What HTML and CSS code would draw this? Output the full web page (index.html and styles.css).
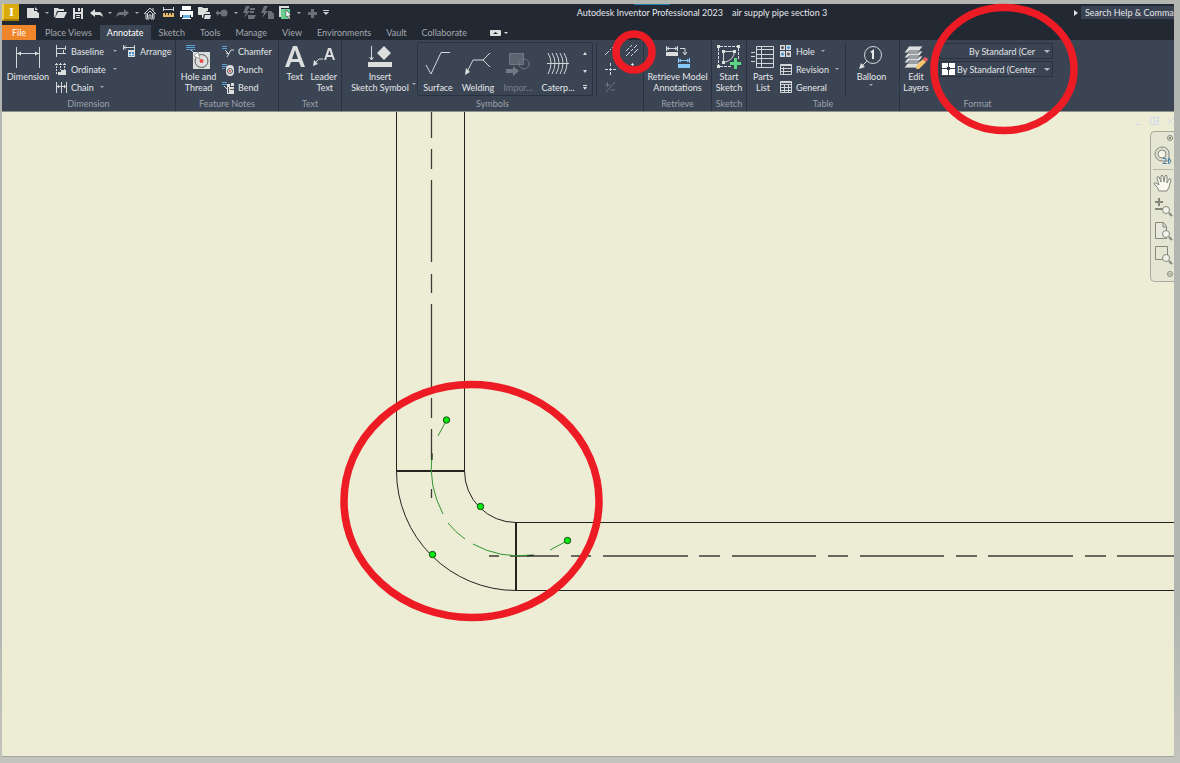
FILE: index.html
```html
<!DOCTYPE html>
<html lang="en">
<head>
<meta charset="utf-8">
<title>Autodesk Inventor Professional 2023</title>
<link rel="stylesheet" href="styles.css">
</head>
<body>
<div class="app">
  <header class="titlebar">
    <button class="logo" aria-label="Inventor">I</button>
    <div class="quick">
      <button class="tool" aria-label="New"><svg width="14" height="14"><path class="f" d="M1 2h7v3h3v1l2 1v5H1z"/><path class="f" d="M9 1l3 3H9z"/></svg></button>
      <button class="caret" aria-label="New options"></button>
      <button class="tool" aria-label="Open"><svg width="14" height="14"><path class="f" d="M1 2h4l1 1h5v2H4l-2 6H1z"/><path class="f" d="M5 6h9l-3 6H2z"/></svg></button>
      <button class="tool" aria-label="Save"><svg width="14" height="14"><path class="f" fill-rule="evenodd" d="M2 2h10v11H2zM4 2v4h6V2zM4 8v5h6V8z"/><path class="f" d="M7 2h2v3H7zM5 9h4v1H5zM5 11h4v1H5z"/></svg></button>
      <button class="tool" aria-label="Undo"><svg width="14" height="14"><path class="f" d="M1 7l5-4v3h4q3 0 4 5-2-2-4-2H6v2z"/></svg></button>
      <button class="caret" aria-label="Undo list"></button>
      <button class="tool dim" aria-label="Redo"><svg width="14" height="14"><path class="f" d="M13 7L8 3v3H4Q1 6 0 11q2-2 4-2h4v2z"/></svg></button>
      <button class="caret" aria-label="Redo list"></button>
      <button class="tool" aria-label="Home"><svg width="14" height="14"><path class="s" d="M1 8l6-6 6 6M3 7v6h3V9h2v4h3V7M10 2v3"/><path class="s" d="M4 8l3-3 3 3M4.500 8v4M9.500 8v4"/></svg></button>
      <button class="tool" aria-label="Measure"><svg width="14" height="14"><path fill="#e3b567" d="M2 7h11v4H2z"/><path class="s" d="M2.500 1v4M12.500 1v4M2 3.500h10"/><path stroke="#333" d="M4.500 7v2M7.500 7v2M10.500 7v2"/></svg></button>
      <button class="tool" aria-label="Print"><svg width="14" height="14"><path fill="#fff" d="M3 0h9v4H3zM1 5h13v6h-2V9H3v2H1z"/><path fill="#69b4e5" d="M4 9h7v3H4z"/><path fill="#fff" d="M3 12h9v1H3z"/></svg></button>
      <button class="tool" aria-label="Project"><svg width="14" height="14"><path class="f" d="M1 1h4l1 1h5v3H5v4H1z"/><path class="f" d="M5 5h4l1 1h3v2H7l-1 4H5z"/><path class="f" d="M8 9h6l-1 4H7z"/></svg></button>
      <button class="tool dim" aria-label="Link"><svg width="14" height="14"><circle class="f" cx="9" cy="7" r="3.500"/><path class="f" d="M1 6h6v2H1zM2 4l3 3-3 3z"/></svg></button>
      <button class="caret" aria-label="Link options"></button>
      <button class="tool dim" aria-label="Update"><svg width="14" height="14"><path class="f" d="M4 0h4L5 5h3L2 12l2-5H1z"/><path class="f" d="M8 2h5v2H8zM8 5h4v2H8zM6 9h8l-2 4H6z"/></svg></button>
      <button class="tool dim" aria-label="Update all"><svg width="14" height="14"><path class="f" d="M4 0h4L5 5h3L2 12l2-5H1z"/><path class="f" d="M8 5h3l3 3v5H8z"/></svg></button>
      <button class="tool" aria-label="Select"><svg width="14" height="14"><path class="f" d="M1 0h10v2H3v9H1z"/><path fill="#69ce91" d="M3 3h9v10H3z"/><path fill="#fff" stroke="#222" stroke-width=".5" d="M8 4l5 5-2 .5 1.500 3-1.500.5-1.300-3L8 11z"/></svg></button>
      <button class="caret" aria-label="Select options"></button>
      <button class="tool dim" aria-label="Add"><svg width="14" height="14"><path class="f" d="M6 3h3v3h3v3H9v3H6V9H3V6h3z"/></svg></button>
      <button class="caret bar" aria-label="Customize"></button>
    </div>
    <div class="title"><span>Autodesk Inventor Professional 2023</span><span>air supply pipe section 3</span></div>
    <button class="expand" aria-label="Expand search"><svg width="8" height="8"><path class="f" d="M4 1l4 3-4 3z"/></svg></button>
    <input class="search" aria-label="Search" value="Search Help &amp; Commands...">
  </header>

  <nav class="tabs">
    <button class="file">File</button>
    <button>Place Views</button><button class="on">Annotate</button><button>Sketch</button><button>Tools</button><button>Manage</button><button>View</button><button>Environments</button><button>Vault</button><button>Collaborate</button>
    <button class="mini" aria-label="Minimize ribbon"><svg width="20" height="8"><rect class="f" y="1" width="11" height="6" rx="1"/><path fill="#222933" d="M3 5l2.500-2L8 5z"/><path class="f" d="M14 3h4l-2 2z"/></svg></button>
  </nav>

  <div class="ribbon">
    <section class="panel dimension">
      <div class="body">
        <button class="big"><svg width="26" height="24"><path class="s" d="M1.500 2v21M24.500 2v21M2 8.500h22"/><path class="f" d="M2 8.500l4-2v4zM24 8.500l-4-2v4z"/></svg><span>Dimension</span></button>
        <div class="col mid">
          <button class="row spread"><svg width="12" height="12"><path class="s" d="M1.500 0v12M1 3.500h9M10.500 1v4M1 8.500h10M8.500 5v3"/></svg>Baseline<i></i></button>
          <button class="row spread"><svg width="12" height="12"><path class="s" stroke-dasharray="2 1" d="M1.500 0v11M5.500 0v7M9.500 0v7"/><path class="f" d="M3 9h3V7h5v5H3zM0 1h3v1H0zM4 1h3v1H4zM8 1h3v1H8z"/></svg>Ordinate<i></i></button>
          <button class="row"><svg width="12" height="12"><path class="s" d="M1.500 1v11M6.500 1v11M11.500 1v11M1 5.500h10"/><path class="f" d="M2 5.500l2-2v4zM11 5.500l-2-2v4z"/></svg>Chain<i></i></button>
        </div>
        <div class="col">
          <button class="row"><svg width="13" height="12"><path class="s" d="M.5 0v5M1 2.500h10M11.500 0v5M1 2.500l2-2M1 2.500l2 2"/><path class="f" d="M5 5h7v7H5z"/><path fill="#3b91cf" d="M6 7h2v2H6zM9 7h2v2H9zM6 10h2v1H6zM9 10h2v1H9z"/></svg>Arrange</button>
        </div>
      </div>
      <h2>Dimension</h2>
    </section>

    <section class="panel feature">
      <div class="body">
        <button class="big"><svg width="26" height="26"><path class="b" d="M0 1.500h9M0 3.500h9M0 5.500h9"/><path class="f" d="M7 8h17v17H7z"/><circle fill="none" stroke="#555" cx="15.500" cy="17" r="6.500"/><circle fill="#e44" cx="15.500" cy="17" r="2"/><path class="s" d="M5 6l9 9"/><path fill="#fff" stroke="#555" stroke-width=".5" d="M14 15l-6-3 4-4z"/></svg><span>Hole and<br>Thread</span></button>
        <div class="col">
          <button class="row"><svg width="13" height="13"><path class="b" d="M0 1.500h5M0 3.500h5"/><path class="s" d="M3 5l4 4M5 12l4-7h3M7 9l-3-1"/></svg>Chamfer</button>
          <button class="row"><svg width="13" height="13"><path class="b" d="M0 1.500h5M0 3.500h5M0 5.500h3"/><rect class="f" x="4" y="2" width="8" height="11" rx="4"/><circle fill="none" stroke="#555" cx="8" cy="8" r="2.500"/><circle fill="#e44" cx="8" cy="8" r="1"/></svg>Punch</button>
          <button class="row"><svg width="13" height="13"><path class="b" d="M0 1.500h5M0 3.500h5"/><path class="f" d="M5 3h3v3h4v7H5zM9 2h3v3H9z"/><path class="s" d="M2 5l3 3"/><path stroke="#555" fill="none" d="M6.500 6v6M8 8.500h4"/></svg>Bend</button>
        </div>
      </div>
      <h2>Feature Notes</h2>
    </section>

    <section class="panel text">
      <div class="body">
        <button class="big"><svg width="20" height="24"><path class="f" fill-rule="evenodd" d="M8 1h4l8 21h-4l-2-5H6l-2 5H0zM10 5l-3 9h6z"/></svg><span>Text</span></button>
        <button class="big"><svg width="24" height="24"><path class="f" fill-rule="evenodd" d="M16 3h3l4 12h-2l-1-3h-5l-1 3h-2zM17.500 5L16 10h3z"/><path class="f" d="M1 21l1-6 4 4z"/><path class="s" d="M3 18l4-4h4"/></svg><span>Leader<br>&nbsp;Text</span></button>
      </div>
      <h2>Text</h2>
    </section>

    <section class="panel symbols">
      <div class="body">
        <button class="big"><svg width="24" height="24"><path class="f" d="M16 1l7 7-7 7-7-7zM0 17h24v5H0z"/><path class="s" d="M3.500 1v14M1.500 12l2 3 2-3"/></svg><span>Insert<br>Sketch Symbol</span><i class="corner"></i></button>
        <div class="gallery">
          <button><svg width="28" height="28"><path class="s" d="M2 16l5 9L17 3.500h9"/></svg><span>Surface</span></button>
          <button><svg width="28" height="28"><path class="s" d="M3 23l6-12h10l7-7M19 11l7 7"/><path class="f" d="M1 26l1-7 4 4z"/></svg><span>Welding</span></button>
          <button class="off"><svg width="28" height="28"><path fill="#9aa0a8" class="box" d="M5.500 4.500h14v11h-14z"/><circle class="s" cx="20" cy="15" r="5"/><path class="f" d="M2 20h7v-3l6 5-6 5v-3H2z"/></svg><span>Impor...</span></button>
          <button><svg width="28" height="28"><path class="s" d="M3 14.500h22M4 4q6 10 0 21M8 4q6 10 0 21M12 4q6 10 0 21M16 4q6 10 0 21M20 4q6 10 0 21"/></svg><span>Caterp...</span></button>
          <div class="scroll">
            <button aria-label="Up"><svg width="6" height="4"><path class="f" d="M1 4h4L3 1z"/></svg></button>
            <button aria-label="Down"><svg width="6" height="4"><path class="f" d="M1 0h4L3 3z"/></svg></button>
            <button aria-label="More"><svg width="6" height="6"><path class="f" d="M1 0h4v1H1zM1 2h4L3 5z"/></svg></button>
          </div>
        </div>
        <div class="marks">
          <button aria-label="Centerline"><svg width="12" height="12"><path class="s" d="M1 10l4-4M6 5l1-1M8 3l3-3"/></svg></button>
          <button aria-label="Centerline bisector"><svg width="14" height="12"><path class="s" d="M1 6l3-3M5 2l2-2M1 11l4-4M6 6l2-2M9 3l3-3M6 11l2-2M9 8l4-4"/></svg></button>
          <button aria-label="Center mark"><svg width="12" height="12"><path class="s" d="M6.500 0v3M6.500 9v3M1 6.500h3M9 6.500h3M5 6.500h3M6.500 5v3"/></svg></button>
          <button aria-label="Centered pattern"><svg width="12" height="12"><path class="s" d="M6.500 0v3M5 1.500h3"/></svg></button>
          <button class="off" aria-label="Edit"><svg width="12" height="12"><path class="s" d="M2 11L11 1M1 4h5M3.500 1v5M7 9h4"/></svg></button>
        </div>
      </div>
      <h2>Symbols</h2>
    </section>

    <section class="panel retrieve">
      <div class="body">
        <button class="big"><svg width="24" height="26"><path class="f" d="M0 8h12v4H0z"/><path class="s" d="M.5 2v5M11.500 2v5M1 4.500h10M14 4.500h5V10M17 8l2 3 2-3M3 3L1 4.500 3 6M9 3l2 1.500L9 6"/><path fill="#85c8fa" d="M12 20h12v4H12z"/><path stroke="#85c8fa" fill="none" d="M12.500 14v5M23.500 14v5M13 16.500h10M15 15l-2 1.500 2 1.500M21 15l2 1.500-2 1.500"/></svg><span>Retrieve Model<br>Annotations</span></button>
      </div>
      <h2>Retrieve</h2>
    </section>

    <section class="panel sketch">
      <div class="body">
        <button class="big"><svg width="26" height="26"><path class="s" d="M4 2.500h17M2.500 4v17M22.500 4v11M4 22.500h12" stroke-dasharray="3 1"/><path class="s" d="M7.500 18V7.500h11Q18 16 8 18.500"/><path class="f" d="M1 1h3v3H1zM21 1h3v3h-3zM1 21h3v3H1zM6 6h3v3H6zM6 17h3v3H6zM17 6h3v3h-3z"/><path fill="#5bd783" d="M18 14h3v4h4v3h-4v4h-3v-4h-4v-3h4z"/></svg><span>Start<br>Sketch</span></button>
      </div>
      <h2>Sketch</h2>
    </section>

    <section class="panel table">
      <div class="body">
        <button class="big"><svg width="24" height="26"><path class="s" d="M5.500 2.500h17v21h-17zM10.500 2v21M5 5.500h17M5 10.500h17M5 14.500h17M5 19.500h17M0 8.500h4M0 12.500h4M0 17.500h4"/></svg><span>Parts<br>List</span></button>
        <div class="col">
          <button class="row"><svg width="12" height="12"><path class="f" d="M0 0h5v5H0zM6 0h5v5H6zM0 6h5v6H0zM6 6h5v6H6z"/><circle fill="#555" cx="2.500" cy="2.500" r="1.500"/><circle fill="#3b91cf" cx="8.500" cy="2.500" r="1.500"/><circle fill="#3b91cf" cx="2.500" cy="9" r="1.500"/><circle fill="#555" cx="8.500" cy="9" r="1.500"/></svg>Hole<i></i></button>
          <button class="row"><svg width="12" height="12"><path class="s" d="M.5 1.500h11v10H.5zM1 2.500h11M1 5.500h11M1 8.500h11M3.500 4v7"/></svg>Revision<i></i></button>
          <button class="row"><svg width="12" height="12"><path class="s" d="M.5.5h11v11H.5zM1 1.500h11M1 3.500h11M1 6.500h11M1 9.500h11M4.500 3v8M8.500 3v8"/></svg>General</button>
        </div>
        <button class="big balloon"><svg width="26" height="26"><circle class="s" cx="15" cy="11" r="8.500"/><path class="s" d="M9 17l-6 6"/><path fill="none" stroke="#e6e7e8" stroke-width="2" d="M13 8.500l2-1.500v8"/><path class="f" d="M1 25l2-6 4 4z"/></svg><span>Balloon</span><i></i></button>
      </div>
      <h2>Table</h2>
    </section>

    <section class="panel format">
      <div class="body">
        <button class="big"><svg width="26" height="28"><path class="f" stroke="#3b4453" stroke-width=".8" d="M1 25l5-7h14l-5 7zM1 20l5-7h14l-5 7zM1 15l5-7h14l-5 7zM1 10l5-7h14l-5 7z"/><path fill="#f6c66a" d="M13 26l1-4 6-6 3 3-7 7z"/><path fill="#ef5966" d="M20 16l2-2q2 0 3 3l-2 2z"/></svg><span>Edit<br>Layers</span></button>
        <div class="pickers">
          <div class="pick"><select class="inset" aria-label="Object layer"><option>By Standard (Cer</option></select></div>
          <div class="pick"><svg width="13" height="12"><path fill="#fff" d="M0 0h6v5H0zM7 0h6v5H7zM0 6h6v6H0zM7 6h6v6H7z"/><path fill="#222933" d="M5 4h1v1H5zM7 4h1v1H7zM5 6h1v1H5zM7 6h1v1H7z"/></svg><select aria-label="Object style"><option>By Standard (Center</option></select></div>
        </div>
      </div>
      <h2>Format</h2>
    </section>
  </div>

  <main class="canvas">
    <svg class="drawing" viewBox="2 112 1172 644" preserveAspectRatio="xMinYMin slice" role="img" aria-label="Pipe section">
      <g fill="none" stroke="#24241f">
        <path d="M396.500 112v358.500M464.500 112v358.500M515 522.500h660M515 590.500h660"/>
        <path stroke-width="2" d="M396 471h69M516 522v69"/>
        <path d="M396.500 471A119.500 119.500 0 0 0 516 590.500M464.500 471A51.500 51.500 0 0 0 516 522.500"/>
        <path stroke="#3c3c35" stroke-width="1.300" d="M431.500 112v26M431.500 149v20M431.500 180v82M431.500 274v19M431.500 304v83M431.500 398v20M431.500 429v31M431.500 489v9"/>
        <path stroke="#3c3c35" stroke-width="1.300" d="M489 556h10M510 556h49M571 556h20M603 556h85M699 556h21M732 556h84M828 556h20M860 556h84M956 556h21M988 556h85M1085 556h21M1117 556h60"/>
        <path stroke="#309532" d="M432 454Q428 486 443 514M448 523q7 9 17 16M473 544q27 15 59 11M438 436l7-13M550 550l15-8"/>
        <path d="M432 453v7M527 556l7-1"/>
      </g>
      <g fill="#08e80c" stroke="#174b17">
        <circle cx="446.500" cy="420" r="3.200"/><circle cx="480.500" cy="506.500" r="3.200"/><circle cx="432.500" cy="554.500" r="3.200"/><circle cx="567.500" cy="540.500" r="3.200"/>
      </g>
    </svg>
    <div class="side">
      <div class="window">
        <button aria-label="Minimize"><svg width="10" height="10"><path d="M1 8.500h6"/></svg></button>
        <button aria-label="Restore"><svg width="10" height="10"><path d="M.5 1.500h8v7h-8zM4.500 2v6M5 5h4"/></svg></button>
        <button aria-label="Close"><svg width="10" height="10"><path d="M1 2l7 7M8 2L1 9"/></svg></button>
      </div>
      <div class="navbar">
        <button class="tiny" aria-label="Close bar"><svg width="6" height="6"><circle cx="3" cy="3" r="2.500"/><path d="M2 2l2 2M4 2L2 4"/></svg></button>
        <button aria-label="Wheel 2D"><svg width="20" height="20"><path fill="#dedfd3" d="M9 2a7 7 0 1 0 0 14h7V8q-1-6-7-6z"/><circle fill="#f4f4ea" cx="9" cy="9" r="4"/><path stroke="#4a7fa8" d="M10 13.500h3v2l-3 3h4M15.500 13.500v5h1q3-2 0-5z"/></svg></button>
        <hr>
        <button aria-label="Pan"><svg width="20" height="20"><path fill="#fafaf3" d="M6 18q-1-4-4-6-2-3 1-2l3 2-2-7q0-2 2-1l2 5V3q1-2 2 0l1 6 1-6q1-2 2 0v7l2-4q2-1 2 1l-2 7-2 4z"/></svg></button>
        <button aria-label="Zoom"><svg width="20" height="20"><path stroke-width="2" d="M6 1v8M2 5h8M2 12h8"/><circle fill="#f4f4ec" cx="13" cy="13" r="3.500"/><path stroke-width="2" d="M16 16l3 3"/></svg></button>
        <button aria-label="Zoom all"><svg width="20" height="20"><path fill="#e8e8de" d="M2.500 1.500h8l3 4v12h-11zM10 2v4h4"/><circle fill="#f4f4ec" cx="13" cy="13" r="3.500"/><path stroke-width="2" d="M16 16l3 3"/></svg></button>
        <button aria-label="Zoom window"><svg width="20" height="20"><path d="M2.500 1.500h12v13h-12z"/><circle fill="#f4f4ec" cx="13" cy="13" r="3.500"/><path stroke-width="2" d="M16 16l3 3"/></svg></button>
        <button class="tiny" aria-label="Options"><svg width="6" height="6"><circle cx="3" cy="3" r="2.500"/><path d="M1.500 3h3"/></svg></button>
      </div>
    </div>
  </main>
</div>
<svg class="callouts" width="1180" height="763" viewBox="0 0 1180 763" aria-hidden="true">
  <path stroke="#1d7ea8" stroke-width="1" d="M634 4.500h36"/>
  <g stroke="#ed1c24">
    <ellipse cx="471.500" cy="501" rx="127.500" ry="116.500" stroke-width="7.500"/>
    <circle cx="634" cy="52" r="18" stroke-width="7.500"/>
    <ellipse cx="1004" cy="69" rx="70" ry="61.500" stroke-width="7.500"/>
  </g>
</svg>
</body>
</html>
```

FILE: styles.css
```css
* { box-sizing: border-box; }
html, body { height: 100%; }
body {
  margin: 0;
  padding: 4px 6px 7px 2px;
  position: relative;
  overflow: hidden;
  background: linear-gradient(#b3b6b0, #b3b6b0 80%, #c3c4be);
  font: 9px/11px Lato, "Open Sans", sans-serif;
  color: #e4e6e9;
}
button, input, select { font: inherit; color: inherit; }
button { margin: 0; padding: 0; border: 0; background: none; white-space: nowrap; }
svg { display: block; flex: none; }
.f { fill: #dcdddd; }
.s { fill: none; stroke: #d3d6d9; stroke-width: 1; }
.b { fill: none; stroke: #5ca2d3; stroke-width: 1; }
.box { stroke: #d3d6d9; }
.app { height: 100%; display: flex; flex-direction: column; overflow: hidden; box-shadow: 0 1px #a6a8a0; }

.titlebar { flex: none; height: 21px; display: flex; align-items: center; background: #222933; padding-bottom: 4px; }
.logo { width: 17px; height: 17px; margin-right: 5px; background: #d9aa0c; border-left: 2px solid #efcf4c; border-bottom: 2px solid #a67d09; color: #fff; font: bold 13px/14px "Liberation Serif", serif; }
.quick { display: flex; }
.tool { width: 18px; height: 17px; display: flex; align-items: center; justify-content: center; }
.dim { opacity: .4; }
.caret { width: 9px; display: flex; align-items: center; justify-content: center; }
.caret::after, i { content: ""; display: block; width: 0; height: 0; border: 2px solid transparent; border-top-color: #a5abb2; border-bottom: 0; }
.bar { flex-direction: column; gap: 1px; }
.bar::before { content: ""; width: 6px; height: 1px; background: #c8cbcf; }
.bar::after { border-width: 3px 3px 0; border-top-color: #c8cbcf; }
.title { flex: 1; display: flex; justify-content: center; gap: 9px; padding-left: 4px; white-space: nowrap; }
.expand { width: 11px; }
.search { width: 93px; height: 13px; padding: 0 0 0 4px; border: 0; border-radius: 0; background: #3a4351; }

.tabs { flex: none; height: 15px; display: flex; gap: 1px; background: #222933; color: #a3a8af; }
.tabs button { padding: 0 7px; }
.tabs .file { width: 34px; margin-right: 1px; background: #f0862b; color: #fff; }
.tabs .on { background: #3b4453; color: #fff; }
.tabs .mini { padding: 0 15px; }

.ribbon { flex: none; height: 72px; display: flex; background: #3b4453; border-bottom: 1px solid #8f928c; }
.panel { flex: none; border-right: 1px solid #2a323f; display: flex; flex-direction: column; padding: 2px 2px 0; }
.panel h2 { margin: 1px 0 0; font: inherit; text-align: center; color: #9ba1aa; }
.body { height: 55px; display: flex; }
.dimension { width: 174px; }
.feature { width: 103px; }
.text { width: 63px; }
.symbols { width: 302px; }
.retrieve { width: 68px; }
.sketch { width: 35px; }
.table { width: 153px; }
.format { width: 155px; border: 0; }
.big { position: relative; display: grid; grid-template-rows: 29px auto; align-content: start; justify-items: center; align-items: center; text-align: center; }
.dimension .big { width: 48px; }
.feature .big { width: 41px; }
.text .big { width: 28px; }
.text .big + .big { width: 31px; }
.symbols .big { width: 74px; }
.retrieve .big, .sketch .big { width: 100%; }
.table .big { width: 28px; }
.format .big { width: 28px; }
.big i { margin-top: 2px; }
.big .corner { position: absolute; right: 0; bottom: 12px; }
.col { display: flex; flex-direction: column; padding-left: 3px; }
.mid { width: 68px; }
.row { height: 18px; display: flex; align-items: center; gap: 4px; }
.feature .row { gap: 3px; }
.row i { margin-left: 2px; }
.spread { width: 62px; }
.spread i { margin-left: auto; }

.gallery { display: flex; margin: 0 0 0 1px; height: 54px; border: 1px solid #2a323f; border-radius: 2px; }
.gallery > button { width: 40px; display: grid; grid-template-rows: 39px auto; align-content: start; justify-items: center; align-items: center; }
.off { opacity: .35; }
.scroll { width: 14px; display: grid; grid-template-rows: 20px 18px 1fr; justify-items: center; }
.scroll button { display: flex; align-items: center; }
.marks { flex: 1; display: grid; grid-template: repeat(3, 18px) / 26px 18px; justify-items: center; align-items: center; margin-left: 3px; border-left: 1px solid #2a323f; }
.table .balloon { width: auto; flex: 1; margin-left: 6px; border-left: 1px solid #2a323f; }

.pickers { flex: 1; display: flex; flex-direction: column; gap: 2px; padding: 1px 0 0 9px; }
.pick { height: 16px; display: flex; align-items: center; padding-left: 2px; border: 1px solid #2a323f; position: relative; }
.pick::after { content: ""; position: absolute; right: 2px; top: 6px; border: 3px solid transparent; border-top-color: #b5bac1; border-bottom: 0; }
.pick select { flex: 1; min-width: 0; height: 14px; padding: 0 0 0 2px; border: 0; background: none; appearance: none; }
.pick .inset { padding-left: 27px; }
.pick option { color: #222933; }

.canvas { flex: 1; min-height: 0; position: relative; background: #edecd5; }
.drawing { position: absolute; inset: 0; width: 100%; height: 100%; }
.side { position: absolute; top: 4px; right: 0; display: flex; flex-direction: column; align-items: flex-end; }
.window { display: flex; gap: 6px; height: 15px; }
.window svg { fill: none; stroke: #cfd9ea; }
.window button { width: 10px; height: 10px; }
.window button:last-child { width: 8px; }
.navbar { width: 24px; display: flex; flex-direction: column; align-items: center; border: 1px solid #a9aa9c; border-right: 0; border-radius: 5px 0 0 5px; background: #e5e5d3; }
.navbar svg { fill: none; stroke: #85867c; }
.navbar button { height: 24px; }
.navbar .tiny { height: 14px; align-self: flex-end; padding-right: 1px; }
.navbar .tiny:first-child { height: 11px; }
.navbar hr { width: 20px; margin: 2px 0 1px; border: 0; border-top: 1px solid #b7b8aa; }
.callouts { position: absolute; top: 0; left: 0; fill: none; pointer-events: none; }
```
